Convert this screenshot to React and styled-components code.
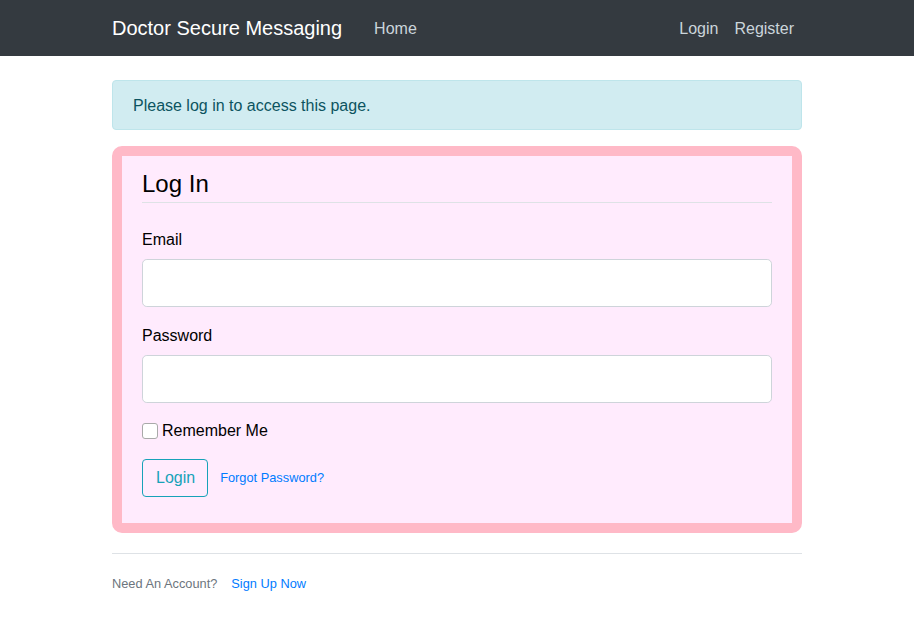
import React from "react";
import styled, { createGlobalStyle } from "styled-components";

const GlobalStyle = createGlobalStyle`
	* { box-sizing: border-box; }
	body {
		margin: 0;
		font-family: "Liberation Sans", Arial, sans-serif;
		font-size: 16px;
		line-height: 1.5;
		color: #000;
		background: #fff;
	}
`;

const Header = styled("header")`
	background: #343a40;
	height: 56px;
`;
const Wrap = styled("div")`
	width: 720px;
	max-width: 100%;
	margin: 0 auto;
	padding: 0 15px;
`;
const NavBar = styled(Wrap)`
	display: flex;
	align-items: center;
	height: 56px;
`;
const Brand = styled("a")`
	color: #fff;
	font-size: 20px;
	margin-right: 24px;
	text-decoration: none;
	line-height: 30px;
`;
const NavGroup = styled("nav")`
	display: flex;
	margin-left: ${(p) => (p.right ? "auto" : "0")};
`;
const NavLink = styled("a")`
	color: #cbd5db;
	padding: 9px 8px 7px;
	text-decoration: none;
`;

const Main = styled(Wrap)`
	padding-top: 24px;
`;
const Alert = styled("div")`
	background: #d1ecf1;
	border: 1px solid #bee5eb;
	color: #0c5460;
	border-radius: 4px;
	padding: 13px 20px 11px;
	margin-bottom: 16px;
`;
const Section = styled("div")`
	background: #ffebfd;
	border: 10px solid #ffb9c7;
	border-radius: 10px;
	padding: 10px 20px;
	margin-bottom: 20px;
`;
const Legend = styled("div")`
	font-size: 24px;
	line-height: 36px;
	border-bottom: 1px solid #dee2e6;
	margin-bottom: 24px;
`;
const Group = styled("div")`
	margin-bottom: 16px;
`;
const Label = styled("label")`
	display: block;
	padding-top: 1px;
	margin-bottom: 7px;
`;
const Input = styled("input")`
	display: block;
	width: 100%;
	height: 48px;
	padding: 8px 16px;
	font-size: 20px;
	border: 1px solid #ced4da;
	border-radius: 4.8px;
	background: #fff;
	font-family: inherit;
`;
const Check = styled("label")`
	display: flex;
	align-items: center;
	height: 24px;
`;
const Box = styled("span")`
	width: 16px;
	height: 16px;
	border: 1px solid #a9a9a9;
	border-radius: 3px;
	background: #fff;
	margin-right: 4px;
`;
const Actions = styled("div")`
	display: flex;
	align-items: center;
	margin-bottom: 16px;
`;
const Button = styled("button")`
	font-family: inherit;
	font-size: 16px;
	line-height: 24px;
	padding: 6px 12px 6px 13px;
	color: #17a2b8;
	background: transparent;
	border: 1px solid #17a2b8;
	border-radius: 4px;
	margin-right: 12px;
`;
const SmallLink = styled("a")`
	font-size: 12.8px;
	color: #007bff;
	text-decoration: none;
	margin-left: ${(p) => p.gap || 0}px;
`;
const Footer = styled("div")`
	border-top: 1px solid #dee2e6;
	padding-top: 20px;
	font-size: 12.8px;
	color: #6c757d;
`;

const App = () => (
	<>
		<GlobalStyle />
		<Header>
			<NavBar>
				<Brand href="#">Doctor Secure Messaging</Brand>
				<NavGroup>
					<NavLink href="#">Home</NavLink>
				</NavGroup>
				<NavGroup right>
					<NavLink href="#">Login</NavLink>
					<NavLink href="#">Register</NavLink>
				</NavGroup>
			</NavBar>
		</Header>
		<Main>
			<Alert>Please log in to access this page.</Alert>
			<Section>
				<Legend>Log In</Legend>
				<Group>
					<Label>Email</Label>
					<Input type="text" />
				</Group>
				<Group>
					<Label>Password</Label>
					<Input type="password" />
				</Group>
				<Group>
					<Check>
						<Box />
						Remember Me
					</Check>
				</Group>
				<Actions>
					<Button>Login</Button>
					<SmallLink href="#">Forgot Password?</SmallLink>
				</Actions>
			</Section>
			<Footer>
				Need An Account?
				<SmallLink href="#" gap={14}>Sign Up Now</SmallLink>
			</Footer>
		</Main>
	</>
);

export default App;
